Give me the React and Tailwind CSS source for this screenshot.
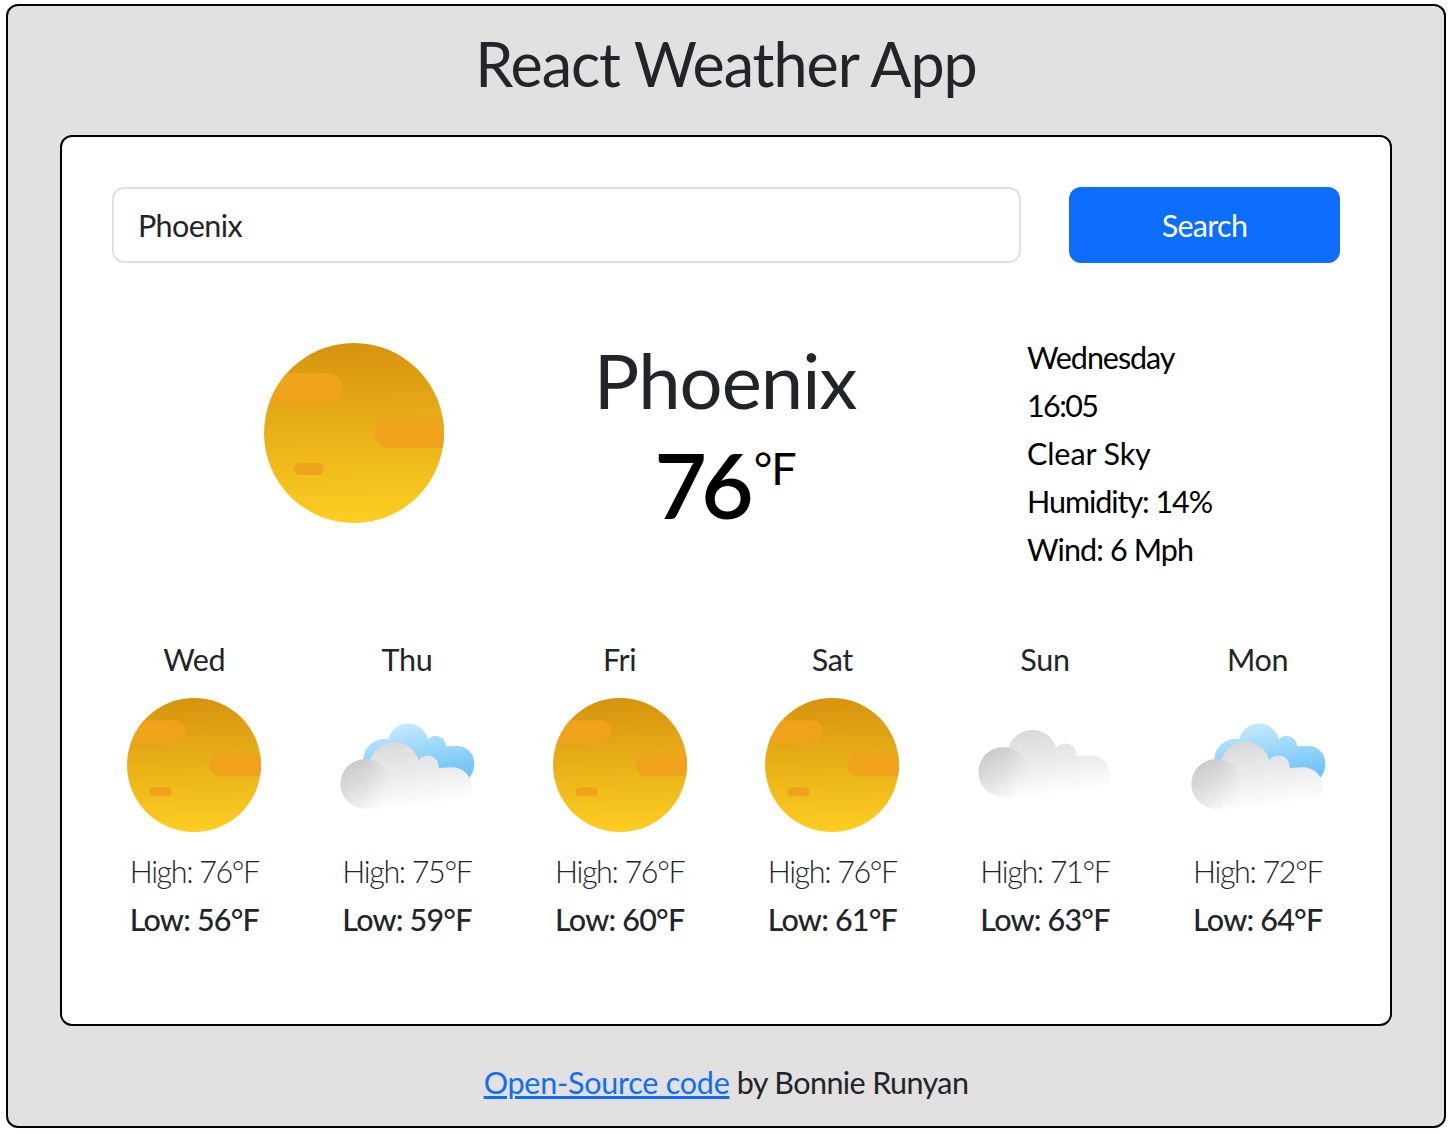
import React from "react";

const forecast = [
  { day: "Wed", icon: "sun", high: 76, low: 56 },
  { day: "Thu", icon: "partly", high: 75, low: 59 },
  { day: "Fri", icon: "sun", high: 76, low: 60 },
  { day: "Sat", icon: "sun", high: 76, low: 61 },
  { day: "Sun", icon: "cloud", high: 71, low: 63 },
  { day: "Mon", icon: "partly", high: 72, low: 64 },
];

function SunIcon({ id, className }) {
  return (
    <svg viewBox="0 0 180 180" className={className}>
      <defs>
        <linearGradient id={`${id}-fill`} x1="0.5" y1="0" x2="0.53" y2="1">
          <stop offset="0" stopColor="#d6930f" />
          <stop offset="1" stopColor="#fdce22" />
        </linearGradient>
        <clipPath id={`${id}-clip`}>
          <circle cx="90" cy="90" r="90" />
        </clipPath>
      </defs>
      <circle cx="90" cy="90" r="90" fill={`url(#${id}-fill)`} />
      <g clipPath={`url(#${id}-clip)`} fill="#eea31a">
        <rect x="-20" y="30" width="98" height="30" rx="14" />
        <rect x="111" y="75" width="90" height="30" rx="14" />
        <rect x="30" y="120" width="30" height="12" rx="6" />
      </g>
    </svg>
  );
}

function CloudIcon({ id, sky, className }) {
  return (
    <svg viewBox="0 0 480 390" className={className}>
      <defs>
        <linearGradient id={`${id}-sky`} gradientUnits="userSpaceOnUse" x1="240" y1="68" x2="262" y2="235">
          <stop offset="0" stopColor="#c6e9fd" />
          <stop offset="1" stopColor="#6ec4f6" />
        </linearGradient>
        <linearGradient id={`${id}-body`} gradientUnits="userSpaceOnUse" x1="205" y1="120" x2="235" y2="325">
          <stop offset="0" stopColor="#d9d9d9" />
          <stop offset="0.5" stopColor="#ebebeb" />
          <stop offset="1" stopColor="#ffffff" />
        </linearGradient>
        <linearGradient id={`${id}-ball`} gradientUnits="userSpaceOnUse" x1="66" y1="192" x2="136" y2="322">
          <stop offset="0" stopColor="#cccccc" />
          <stop offset="0.5" stopColor="#dfdfdf" />
          <stop offset="1" stopColor="#f8f8f8" />
        </linearGradient>
        <linearGradient id={`${id}-edge`} gradientUnits="userSpaceOnUse" x1="120" y1="0" x2="200" y2="0">
          <stop offset="0" stopColor="#fff" />
          <stop offset="1" stopColor="#fff" stopOpacity="0" />
        </linearGradient>
        <mask id={`${id}-mask`} maskUnits="userSpaceOnUse" x="20" y="160" width="180" height="180">
          <rect x="20" y="160" width="180" height="180" fill={`url(#${id}-edge)`} />
        </mask>
      </defs>
      <g transform={sky ? "translate(8 0)" : "translate(8 -36)"}>
        {sky && (
          <path
            fill={`url(#${id}-sky)`}
            d="M102 190 A62 62 0 0 1 176 118 A61 61 0 0 1 295 118 A31 31 0 0 1 349 139 L383 138 C411 138 434 161 434 190 C434 214 422 236 402 250 L110 250 Z"
          />
        )}
        <path
          fill={`url(#${id}-body)`}
          d="M105 327 L105 200 L122 180 A75 75 0 0 1 266 180 A34 34 0 0 1 327 204 L367 202 C402 202 427 230 427 264 C427 300 402 327 367 327 Z"
        />
        <circle cx="107" cy="252" r="75" fill={`url(#${id}-ball)`} mask={`url(#${id}-mask)`} />
      </g>
    </svg>
  );
}

function WeatherIcon({ type, id }) {
  return (
    <div className="flex h-[134px] w-[160px] items-center justify-center">
      {type === "sun" ? (
        <SunIcon id={id} className="h-[134px] w-[134px]" />
      ) : (
        <CloudIcon id={id} sky={type === "partly"} className="h-[130px] w-[160px]" />
      )}
    </div>
  );
}

export default function App() {
  return (
    <div className="h-[1134px] bg-white pt-1 pl-1.5 font-[Lato,sans-serif] text-[30.5px] leading-[48px] text-[#212529]">
      <div className="flex h-[1124px] w-[1440px] flex-col items-center rounded-xl border-2 border-black bg-[#e2e0e1]">
        <h1 className="mt-5 h-[77px] text-[61px] leading-[76px] tracking-[-1px] whitespace-nowrap">
          React Weather App
        </h1>
        <main className="mt-8 h-[891px] w-[1332px] rounded-xl border-2 border-black bg-white px-[50px] pt-[50px]">
          <form className="flex gap-12" onSubmit={(e) => e.preventDefault()}>
            <input
              className="h-[76px] w-[909px] rounded-xl border-2 border-[#dee2e6] bg-white px-6 tracking-[-0.6px] outline-none"
              defaultValue="Phoenix"
              aria-label="City"
            />
            <button className="h-[76px] w-[271px] rounded-xl bg-[#0d6efd] tracking-[-0.7px] text-white">
              Search
            </button>
          </form>

          <section className="flex h-[372px] pt-[70px]">
            <div className="w-[484px] pt-2.5 pl-[152px]">
              <SunIcon id="current" className="h-[180px] w-[180px]" />
            </div>
            <div className="flex w-[258px] flex-col items-center whitespace-nowrap">
              <h2 className="h-[94px] text-[76px] leading-[94px] tracking-[-1px]">Phoenix</h2>
              <div className="flex h-[112px] items-start text-black">
                <strong className="text-[91px] leading-[114px] font-semibold tracking-[-6px]">76</strong>
                <span className="ml-1.5 text-[45px] leading-[83px] tracking-[-1px]">°F</span>
              </div>
            </div>
            <ul className="ml-[173px] text-black">
              <li className="tracking-[-1.05px]">Wednesday</li>
              <li className="tracking-[-1.6px]">16:05</li>
              <li className="tracking-[-0.1px]">Clear Sky</li>
              <li className="tracking-[-1.05px]">Humidity: 14%</li>
              <li className="tracking-[-0.9px]">Wind: 6 Mph</li>
            </ul>
          </section>

          <section className="-mx-[24px] grid grid-cols-6">
            {forecast.map((f) => (
              <div key={f.day} className="flex flex-col items-center whitespace-nowrap">
                <div className="mb-[15px] tracking-[-0.3px]">{f.day}</div>
                <WeatherIcon type={f.icon} id={f.day} />
                <div className="mt-[15px] font-light tracking-[-1.35px]">High: {f.high}°F</div>
                <div className="font-medium tracking-[-0.8px]">Low: {f.low}°F</div>
              </div>
            ))}
          </section>
        </main>
        <footer className="mt-8 tracking-[-0.6px]">
          <a href="#" className="tracking-[-0.25px] text-[#0d6efd] underline">Open-Source code</a> by Bonnie Runyan
        </footer>
      </div>
    </div>
  );
}
